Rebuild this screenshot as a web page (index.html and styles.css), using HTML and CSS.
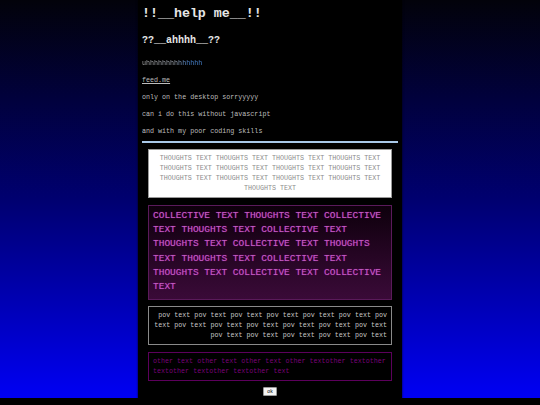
FILE: index.html
```html
<!DOCTYPE html>
<html>
<head>
<meta charset="utf-8">
<link rel="stylesheet" href="styles.css">
</head>
<body>
<div class="page">
  <h1 class="title">!!__help me__!!</h1>
  <h2 class="subtitle">??__ahhhh__??</h2>
  <p class="line grad">uhhhhhhhhhhhhhh</p>
  <p class="line feed">feed.me</p>
  <p class="line">only on the desktop sorryyyyy</p>
  <p class="line">can i do this without javascript</p>
  <p class="line">and with my poor coding skills</p>
  <div class="rule"></div>
  <div class="box thoughts">THOUGHTS TEXT THOUGHTS TEXT THOUGHTS TEXT THOUGHTS TEXT THOUGHTS TEXT THOUGHTS TEXT THOUGHTS TEXT THOUGHTS TEXT THOUGHTS TEXT THOUGHTS TEXT THOUGHTS TEXT THOUGHTS TEXT THOUGHTS TEXT</div>
  <div class="box collective">COLLECTIVE TEXT THOUGHTS TEXT COLLECTIVE TEXT THOUGHTS TEXT COLLECTIVE TEXT THOUGHTS TEXT COLLECTIVE TEXT THOUGHTS TEXT THOUGHTS TEXT COLLECTIVE TEXT THOUGHTS TEXT COLLECTIVE TEXT COLLECTIVE TEXT</div>
  <div class="box pov">pov text pov text pov text pov text pov text pov text pov text pov text pov text pov text pov text pov text pov text pov text pov text pov text pov text pov text</div>
  <div class="box other">other text other text other text other textother textother textother textother textother text</div>
  <div class="actions"><button class="ok">ok</button></div>
</div>
</body>
</html>
```

FILE: styles.css
```css
html {
  margin: 0;
  height: 100%;
  background: linear-gradient(to bottom, #02020a 0px, #000070 200px, #0000f4 398px, #000 398px);
  background-repeat: no-repeat;
  background-color: #000;
}
body {
  margin: 0;
  height: 100%;
  font-family: "Liberation Mono", "Courier New", monospace;
}
.page {
  width: 264px;
  min-height: 405px;
  margin: 0 auto;
  background: #000;
  padding: 6px 4px 0 4px;
  box-sizing: border-box;
  box-shadow: 0 0 2px rgba(0,0,0,0.8);
}
.title {
  margin: 0;
  font-size: 13.3px;
  line-height: 16px;
  font-weight: bold;
  color: #e6e6e6;
}
.subtitle {
  margin: 13px 0 0 0;
  font-size: 10px;
  line-height: 12px;
  font-weight: bold;
  color: #e6e6e6;
}
.line {
  margin: 9px 0 0 0;
  font-size: 6.7px;
  line-height: 8px;
  color: #bdbdbd;
}
.subtitle + .line {
  margin-top: 12px;
}
.grad {
  width: fit-content;
  background: linear-gradient(to right, #b4b4b4 0%, #a8b0bc 55%, #4a88d8 78%, #4a88d8 100%);
  -webkit-background-clip: text;
  background-clip: text;
  color: transparent;
}
.feed {
  text-decoration: underline;
}
.rule {
  margin-top: 6px;
  height: 2px;
  background: #a8c8e8;
}
.box {
  margin: 0 6px 0 6px;
  box-sizing: border-box;
}
.thoughts {
  margin-top: 6px;
  background: #fff;
  border: 1px solid #9a9a9a;
  color: #8c8c8c;
  text-align: center;
  font-size: 6.7px;
  line-height: 10px;
  padding: 3px 6px 4px 6px;
}
.collective {
  margin-top: 7px;
  background: linear-gradient(to bottom, #0e000c, #3a0a38);
  border: 1px solid #5a1a5a;
  color: #c060c0;
  text-shadow: 0 0 1px #a000a0;
  font-size: 9.5px;
  line-height: 14.2px;
  padding: 3px 4px 5px 4px;
}
.pov {
  margin-top: 6px;
  background: #000;
  border: 1px solid #8a8a8a;
  color: #c8c8c8;
  text-align: right;
  font-size: 6.7px;
  line-height: 10px;
  padding: 3px 4px 4px 4px;
}
.other {
  margin-top: 7px;
  background: #000;
  border: 1px solid #5c005c;
  color: #7a007a;
  font-size: 6.7px;
  line-height: 10px;
  padding: 3px 4px 4px 4px;
}
.actions {
  display: flex;
  justify-content: center;
  margin-top: 6px;
}
.ok {
  font-family: "Liberation Sans", Arial, sans-serif;
  font-size: 5px;
  line-height: 7px;
  padding: 0 3px;
  background: #f4f4f4;
  border: 1px solid #999;
  border-radius: 1px;
  color: #000;
}
```
